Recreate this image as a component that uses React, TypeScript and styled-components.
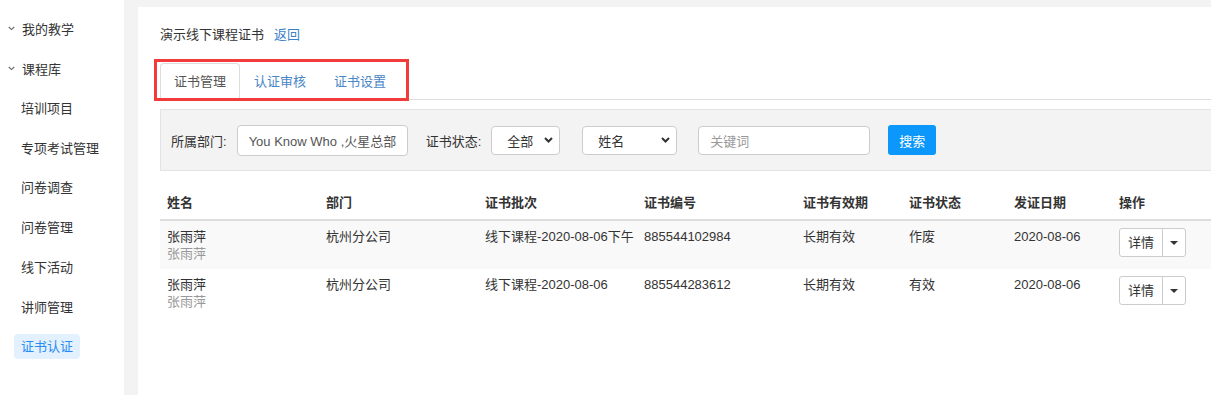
import React from 'react';
import styled, {createGlobalStyle} from "styled-components";

const GlobalStyle = createGlobalStyle`
  body {
    margin: 0;
    background: #f3f3f3;
    font-family: "Liberation Sans", "Noto Sans CJK SC", sans-serif;
    font-size: 13px;
    color: #333;
  }
`

//layout
const Layout = styled.div`
  display: flex;
  min-height: 100vh;
`
const Sidebar = styled.div`
  width: 124px;
  flex-shrink: 0;
  background: #fff;
  padding-top: 9px;
`
const NavItem = styled.div<{ $sub?: boolean }>`
  height: 39.75px;
  display: flex;
  align-items: center;
  padding-left: ${p => p.$sub ? '21px' : '8px'};
  gap: 7px;
  color: #333;
  white-space: nowrap;
`
const NavLabel = styled.span<{ $active?: boolean }>`
  display: inline-block;
  height: 25px;
  line-height: 25px;
  padding: 0 7px;
  margin-left: -7px;
  border-radius: 4px;
  background: ${p => p.$active ? '#e3f1ff' : 'transparent'};
  color: ${p => p.$active ? '#2a8cf0' : '#333'};
`
const Main = styled.div`
  flex: 1;
  padding: 7px 0 0 14px;
  min-width: 0;
`
const Panel = styled.div`
  background: #fff;
  min-height: calc(100vh - 7px);
  padding: 18px 0 0 22px;
  box-sizing: border-box;
`
const Title = styled.div`
  line-height: 20px;
  display: flex;
  gap: 10px;
`
const Link = styled.a`
  color: #3b7fc9;
  text-decoration: none;
`

//tabs
const Nav = styled.div`
  margin-top: 18px;
  display: flex;
  border-bottom: 1px solid #ddd;
`
const TabList = styled.div`
  display: flex;
  position: relative;

  &::after {
    content: "";
    position: absolute;
    top: -4px;
    left: -6px;
    right: -9px;
    bottom: -2px;
    border: 3px solid #f23b3b;
    pointer-events: none;
  }
`
const Tab = styled.div<{ $active?: boolean }>`
  height: 37px;
  line-height: 36px;
  padding: 0 13px;
  margin: 0 0 -1px 0;
  box-sizing: border-box;
  border: 1px solid ${p => p.$active ? '#ddd' : 'transparent'};
  border-bottom-color: ${p => p.$active ? '#fff' : 'transparent'};
  border-radius: 4px 4px 0 0;
  background: #fff;
  color: ${p => p.$active ? '#555' : '#4a87c6'};
  white-space: nowrap;
`

//filter
const FilterBar = styled.div`
  margin-top: 9px;
  height: 62px;
  box-sizing: border-box;
  background: #f3f3f3;
  border: 1px solid #e3e3e3;
  border-right: 0;
  display: flex;
  align-items: center;
  padding-left: 10px;
`
const FilterLabel = styled.span<{ $gap?: number }>`
  margin-left: ${p => p.$gap ?? 0}px;
  margin-right: 10px;
  white-space: nowrap;
`
const TextBox = styled.div<{ $w: number; $h?: number; $gap?: number; $muted?: boolean }>`
  width: ${p => p.$w}px;
  height: ${p => p.$h ?? 29}px;
  margin-left: ${p => p.$gap ?? 0}px;
  box-sizing: border-box;
  background: #fff;
  border: 1px solid #ccc;
  border-radius: 4px;
  display: flex;
  align-items: center;
  padding: 0 11px;
  color: ${p => p.$muted ? '#999' : '#555'};
  white-space: nowrap;
  overflow: hidden;
`
const SelectBox = styled(TextBox)`
  justify-content: space-between;
  padding: 0 6px 0 15px;
  color: #333;
`
const SearchButton = styled.button`
  margin-left: 18px;
  width: 48px;
  height: 30px;
  border: 0;
  border-radius: 3px;
  background: #0c98fa;
  color: #fff;
  font: inherit;
`

//table
const Table = styled.table`
  margin-top: 16px;
  width: 100%;
  table-layout: fixed;
  border-collapse: separate;
  border-spacing: 0;
`
const Th = styled.th<{ $w?: number }>`
  width: ${p => p.$w ? `${p.$w - 14}px` : 'auto'};
  text-align: left;
  font-weight: bold;
  padding: 7px;
  line-height: 18px;
  border-bottom: 2px solid #ddd;
  white-space: nowrap;
`
const Tr = styled.tr<{ $striped?: boolean }>`
  background: ${p => p.$striped ? '#f9f9f9' : '#fff'};

  & + & td {
    border-top: 1px solid #ddd;
  }
`
const Td = styled.td`
  padding: 7px;
  line-height: 17px;
  vertical-align: top;
  white-space: nowrap;
`
const SubName = styled.div`
  color: #999;
`
const SplitButton = styled.div`
  display: inline-flex;
  height: 29px;
  box-sizing: border-box;
  border: 1px solid #ccc;
  border-radius: 3px;
  background: #fff;
`
const SplitMain = styled.span`
  width: 42px;
  display: flex;
  align-items: center;
  justify-content: center;
  border-right: 1px solid #ccc;
`
const SplitCaret = styled.span`
  width: 22px;
  display: flex;
  align-items: center;
  justify-content: center;
`

const Chevron = () => (
    <svg width="7" height="5" viewBox="0 0 7 5">
        <path d="M0.8 1 L3.5 3.6 L6.2 1" fill="none" stroke="#666" strokeWidth="1.1"/>
    </svg>
)
const SelectArrow = () => (
    <svg width="9" height="6" viewBox="0 0 9 6">
        <path d="M1 1 L4.5 4.5 L8 1" fill="none" stroke="#333" strokeWidth="2"/>
    </svg>
)
const Caret = () => (
    <svg width="8" height="4" viewBox="0 0 8 4">
        <path d="M0 0 H8 L4 4 Z" fill="#333"/>
    </svg>
)

const menu = ['培训项目', '专项考试管理', '问卷调查', '问卷管理', '线下活动', '讲师管理', '证书认证']
const columns: [string, number?][] = [
    ['姓名', 159], ['部门', 159], ['证书批次', 159], ['证书编号', 159],
    ['证书有效期', 106], ['证书状态', 105], ['发证日期', 105], ['操作'],
]
const rows = [
    {name: '张雨萍', dept: '杭州分公司', batch: '线下课程-2020-08-06下午', no: '885544102984', valid: '长期有效', status: '作废', date: '2020-08-06'},
    {name: '张雨萍', dept: '杭州分公司', batch: '线下课程-2020-08-06', no: '885544283612', valid: '长期有效', status: '有效', date: '2020-08-06'},
]

const App = () => {
    return (
        <Layout>
            <GlobalStyle/>
            <Sidebar>
                <NavItem><Chevron/>我的教学</NavItem>
                <NavItem><Chevron/>课程库</NavItem>
                {menu.map(m => (
                    <NavItem $sub key={m}>
                        <NavLabel $active={m === '证书认证'}>{m}</NavLabel>
                    </NavItem>
                ))}
            </Sidebar>
            <Main>
                <Panel>
                    <Title>
                        <span>演示线下课程证书</span>
                        <Link>返回</Link>
                    </Title>
                    <Nav>
                        <TabList>
                            <Tab $active>证书管理</Tab>
                            <Tab>认证审核</Tab>
                            <Tab>证书设置</Tab>
                        </TabList>
                    </Nav>
                    <FilterBar>
                        <FilterLabel>所属部门:</FilterLabel>
                        <TextBox $w={171} $h={31}>You Know Who ,火星总部</TextBox>
                        <FilterLabel $gap={18}>证书状态:</FilterLabel>
                        <SelectBox $w={69}>全部<SelectArrow/></SelectBox>
                        <SelectBox $w={95} $gap={22}>姓名<SelectArrow/></SelectBox>
                        <TextBox $w={172} $gap={21} $muted>关键词</TextBox>
                        <SearchButton>搜索</SearchButton>
                    </FilterBar>
                    <Table>
                        <thead>
                        <tr>
                            {columns.map(([c, w]) => <Th key={c} $w={w}>{c}</Th>)}
                        </tr>
                        </thead>
                        <tbody>
                        {rows.map((r, i) => (
                            <Tr key={r.no} $striped={i % 2 === 0}>
                                <Td>{r.name}<SubName>{r.name}</SubName></Td>
                                <Td>{r.dept}</Td>
                                <Td>{r.batch}</Td>
                                <Td>{r.no}</Td>
                                <Td>{r.valid}</Td>
                                <Td>{r.status}</Td>
                                <Td>{r.date}</Td>
                                <Td>
                                    <SplitButton>
                                        <SplitMain>详情</SplitMain>
                                        <SplitCaret><Caret/></SplitCaret>
                                    </SplitButton>
                                </Td>
                            </Tr>
                        ))}
                        </tbody>
                    </Table>
                </Panel>
            </Main>
        </Layout>
    )
};

export default App;
